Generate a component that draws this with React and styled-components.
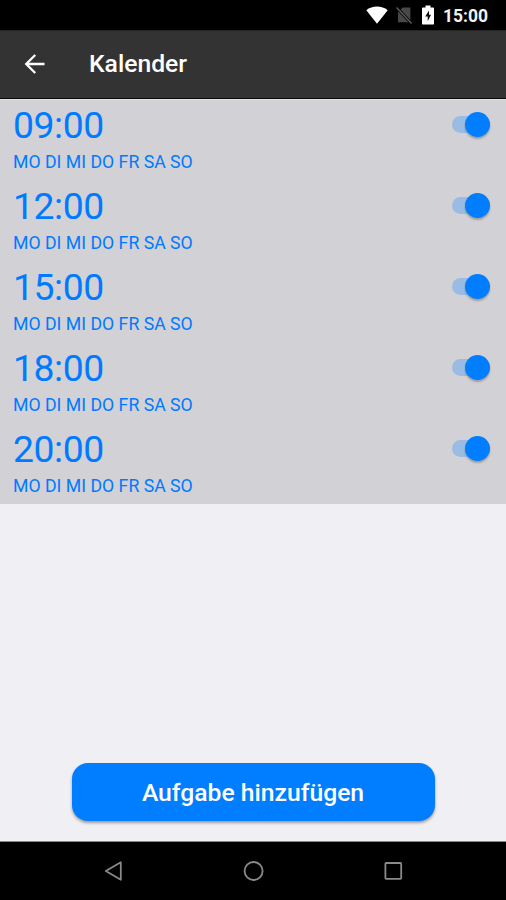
import React, { useState } from "react";
import styled, { createGlobalStyle } from "styled-components";

const alarms = [
    { time: "09:00", days: "MO DI MI DO FR SA SO" },
    { time: "12:00", days: "MO DI MI DO FR SA SO" },
    { time: "15:00", days: "MO DI MI DO FR SA SO" },
    { time: "18:00", days: "MO DI MI DO FR SA SO" },
    { time: "20:00", days: "MO DI MI DO FR SA SO" },
];

const App = () => {
    const [active, setActive] = useState(alarms.map(() => true));

    const toggle = (index) => {
        setActive(active.map((on, i) => (i === index ? !on : on)));
    };

    return (
        <Screen>
            <GlobalStyle />

            <StatusBar>
                <svg width="22" height="18" viewBox="0 0 22 18">
                    <path d="M0.3 4.2C6.2-.6 15.8-.6 21.7 4.2L11 17.8z" fill="#fff" />
                </svg>
                <NoSim width="17" height="20" viewBox="0 0 17 20">
                    <path d="M6.6 2.4h7.8v14.8H2V7z" fill="#484848" />
                    <path d="M0 1.8l15.8 17" stroke="#000" strokeWidth="3" />
                    <path d="M.6 2.6l15 16" stroke="#5c5c5c" strokeWidth="1.4" />
                </NoSim>
                <Battery width="12" height="20" viewBox="0 0 12 20">
                    <path
                        d="M3.5 0.4h5v2H11a1 1 0 0 1 1 1v15a1.2 1.2 0 0 1-1.2 1.2H1.2A1.2 1.2 0 0 1 0 18.4v-15a1 1 0 0 1 1-1h2.5z"
                        fill="#fff"
                    />
                    <path d="M7 5.5L3.2 11.5h2.5V16.3l3.3-6.6H7z" fill="#111" />
                </Battery>
                <Clock>15:00</Clock>
            </StatusBar>

            <Header>
                <BackButton aria-label="Zurück">
                    <svg width="22" height="22" viewBox="0 0 22 22">
                        <path
                            d="M20.5 11H2.5M11.2 2L2.2 11l9 9"
                            fill="none"
                            stroke="#fff"
                            strokeWidth="2.3"
                        />
                    </svg>
                </BackButton>
                <Title>Kalender</Title>
            </Header>

            <AlarmList>
                {alarms.map((alarm, i) => (
                    <AlarmRow key={alarm.time}>
                        <div>
                            <Time>{alarm.time}</Time>
                            <Days>{alarm.days}</Days>
                        </div>
                        <Switch
                            role="switch"
                            aria-checked={active[i]}
                            aria-label={alarm.time}
                            $on={active[i]}
                            onClick={() => toggle(i)}
                        >
                            <Thumb $on={active[i]} />
                        </Switch>
                    </AlarmRow>
                ))}
            </AlarmList>

            <Footer>
                <AddButton>Aufgabe hinzufügen</AddButton>
            </Footer>

            <NavBar>
                <svg width="20" height="22" viewBox="0 0 20 22">
                    <path
                        d="M17.8 2.2v17.6L2.8 11z"
                        fill="none"
                        stroke="#8a8a8a"
                        strokeWidth="1.8"
                        strokeLinejoin="round"
                    />
                </svg>
                <svg width="22" height="22" viewBox="0 0 22 22">
                    <circle cx="11.6" cy="11" r="9" fill="none" stroke="#8a8a8a" strokeWidth="1.8" />
                </svg>
                <svg width="20" height="22" viewBox="0 0 20 22">
                    <rect
                        x="2.4"
                        y="3"
                        width="15.8"
                        height="15.8"
                        rx="0.8"
                        fill="none"
                        stroke="#8a8a8a"
                        strokeWidth="1.8"
                    />
                </svg>
            </NavBar>
        </Screen>
    );
};

const GlobalStyle = createGlobalStyle`
    * {
        box-sizing: border-box;
    }
    body {
        margin: 0;
        font-family: Roboto, sans-serif;
    }
    button {
        padding: 0;
        border: none;
        font-family: inherit;
    }
    svg {
        display: block;
        flex-shrink: 0;
    }
`;

const Screen = styled.div`
    width: 100%;
    height: 100vh;
    display: flex;
    flex-direction: column;
    background-color: #efeff4;
    overflow: hidden;
`;

const StatusBar = styled.div`
    height: 30px;
    flex-shrink: 0;
    display: flex;
    align-items: center;
    justify-content: flex-end;
    padding-right: 18px;
    background-color: #000;
`;

const NoSim = styled.svg`
    margin-left: 8px;
`;

const Battery = styled.svg`
    margin-left: 9px;
`;

const Clock = styled.span`
    margin-left: 9px;
    padding-top: 2px;
    font-size: 17.5px;
    font-weight: 700;
    line-height: 20px;
    color: #f2f2f2;
`;

const Header = styled.header`
    height: 69px;
    flex-shrink: 0;
    display: flex;
    align-items: center;
    padding: 0 0 1px 24px;
    background-color: #333;
    border-top: 1px solid #252525;
    border-bottom: 1px solid #080808;
`;

const BackButton = styled.button`
    width: 22px;
    height: 22px;
    background: none;
`;

const Title = styled.h1`
    margin: 0 0 1px 43px;
    font-size: 24.7px;
    font-weight: 500;
    line-height: 30px;
    color: #fff;
`;

const AlarmList = styled.div`
    flex-shrink: 0;
    background-color: #d1d1d6;
    box-shadow: inset 0 1px #e2e2e6;
`;

const AlarmRow = styled.div`
    height: 81.1px;
    display: flex;
    justify-content: space-between;
    padding: 4px 16px 0 13px;
    color: #007aff;
`;

const Time = styled.div`
    font-size: 37.3px;
    letter-spacing: -0.4px;
    line-height: 45px;
`;

const Days = styled.div`
    margin-top: 4px;
    font-size: 17.7px;
    line-height: 20px;
`;

const Switch = styled.button`
    width: 38px;
    height: 17px;
    margin-top: 13px;
    display: flex;
    align-items: center;
    justify-content: ${(props) => (props.$on ? "flex-end" : "flex-start")};
    border-radius: 9px;
    background-color: ${(props) => (props.$on ? "#9bbce2" : "#aaaaaf")};
`;

const Thumb = styled.span`
    width: 25px;
    height: 25px;
    flex-shrink: 0;
    border-radius: 50%;
    background-color: ${(props) => (props.$on ? "#007eff" : "#f4f4f4")};
    box-shadow: 0 2px 2px rgba(0, 0, 0, 0.25);
`;

const Footer = styled.div`
    flex: 1;
    display: flex;
    align-items: flex-end;
    justify-content: center;
    padding-bottom: 20px;
    border-bottom: 1px solid #8b8b8e;
`;

const AddButton = styled.button`
    width: 363px;
    height: 58px;
    padding-top: 1px;
    border-radius: 16px;
    background-color: #007eff;
    box-shadow: 0 2px 3px rgba(0, 0, 0, 0.35);
    color: #fff;
    font-size: 24.7px;
    font-weight: 500;
`;

const NavBar = styled.nav`
    height: 58px;
    flex-shrink: 0;
    display: flex;
    align-items: center;
    justify-content: space-between;
    padding: 0 103px;
    background-color: #000;
`;

export default App;
